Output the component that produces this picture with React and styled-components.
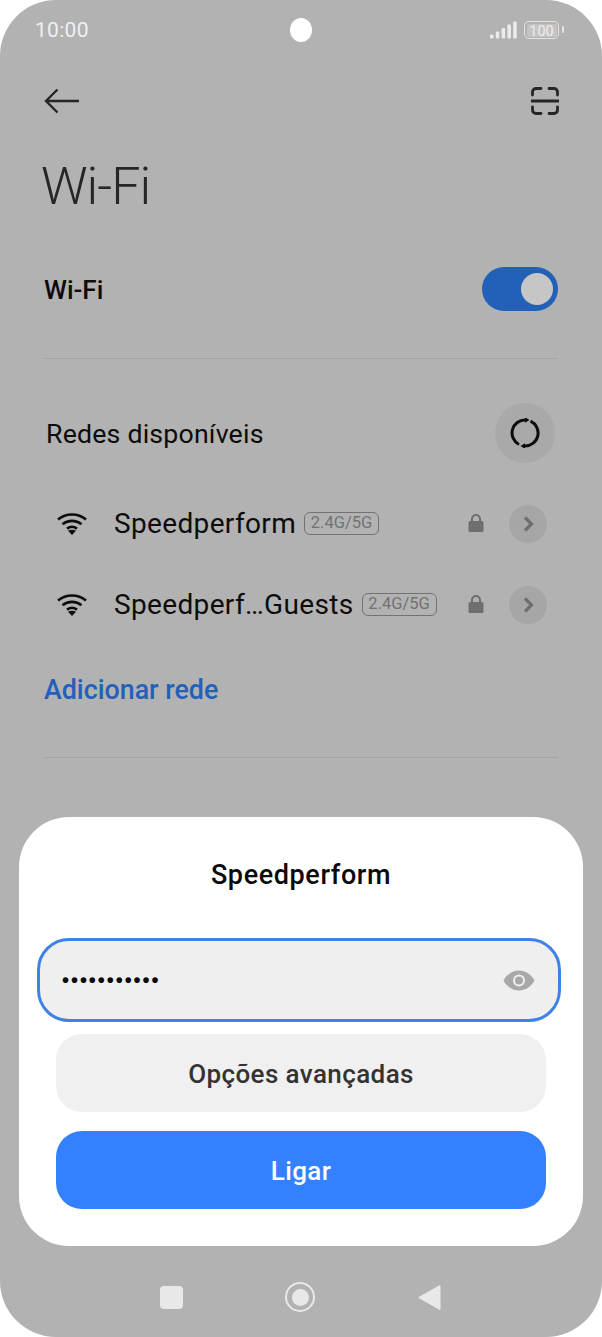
import React from 'react';
import styled, { createGlobalStyle } from 'styled-components';

const GlobalStyle = createGlobalStyle`
  html, body {
    margin: 0;
    padding: 0;
    background: #fff;
    font-family: Roboto, "Noto Sans", sans-serif;
  }
`;

const Phone = styled.div`
  width: 602px;
  height: 1337px;
  background: #b2b2b2;
  border-radius: 56px;
  overflow: hidden;
  display: flex;
  flex-direction: column;
`;

const StatusBar = styled.div`
  flex: none;
  height: 60px;
  padding: 0 35px;
  display: grid;
  grid-template-columns: 1fr auto 1fr;
  align-items: center;
  color: #f0f0f0;
`;

const Time = styled.span`
  font-size: 21px;
  letter-spacing: 0.3px;
`;

const Camera = styled.div`
  width: 22px;
  height: 24px;
  border-radius: 50%;
  background: #fff;
`;

const StatusIcons = styled.div`
  display: flex;
  justify-content: flex-end;
  align-items: center;
  gap: 7px;
  padding-right: 8px;
`;

const Battery = styled.div`
  position: relative;
  width: 35px;
  height: 18px;
  box-sizing: border-box;
  border: 1.5px solid #e4e4e4;
  border-radius: 5px;
  padding: 1.5px;
  font-size: 14.5px;
  line-height: 15px;
  text-align: center;
  background: #c4c4c4;
  background-clip: content-box;
  color: #ededed;
  &::after {
    content: '';
    position: absolute;
    right: -6px;
    top: 4px;
    width: 2px;
    height: 7px;
    background: #e4e4e4;
    border-radius: 1px;
  }
`;

const TopBar = styled.div`
  flex: none;
  height: 82px;
  padding: 0 43px 0 44px;
  display: flex;
  justify-content: space-between;
  align-items: center;
`;

const Title = styled.h1`
  flex: none;
  margin: 0;
  padding: 0 0 0 41px;
  height: 86px;
  font-size: 52px;
  line-height: 90px;
  font-weight: 300;
  letter-spacing: -1px;
  color: #262626;
`;

const ToggleRow = styled.div`
  flex: none;
  height: 131px;
  margin: 0 44px;
  display: flex;
  justify-content: space-between;
  align-items: center;
  border-bottom: 1px solid #a5a5a5;
  box-sizing: border-box;
  padding-bottom: 8px;
`;

const RowLabel = styled.span`
  margin-top: 2px;
  font-size: 26px;
  font-weight: 500;
  color: #0c0c0c;
`;

const Toggle = styled.div`
  width: 76px;
  height: 44px;
  border-radius: 22px;
  background: #2360b8;
  display: flex;
  justify-content: flex-end;
  align-items: center;
  padding-right: 5px;
  box-sizing: border-box;
`;

const Knob = styled.div`
  width: 32px;
  height: 32px;
  border-radius: 50%;
  background: #c6c6c6;
`;

const SectionHead = styled.div`
  flex: none;
  height: 124px;
  box-sizing: border-box;
  padding: 24px 47px 0 46px;
  display: flex;
  justify-content: space-between;
  align-items: center;
`;

const SectionTitle = styled.span`
  margin-top: 2px;
  font-size: 26.7px;
  color: #0c0c0c;
  letter-spacing: 0.2px;
`;

const RefreshButton = styled.div`
  width: 60px;
  height: 60px;
  border-radius: 50%;
  background: #a9a9a9;
  display: flex;
  align-items: center;
  justify-content: center;
`;

const NetworkRow = styled.div`
  flex: none;
  height: 81px;
  padding: 0 55px 0 57px;
  display: flex;
  align-items: center;
`;

const NetworkName = styled.span`
  margin-left: 27px;
  font-size: 28px;
  color: #0c0c0c;
  letter-spacing: 0.35px;
  white-space: nowrap;
`;

const Badge = styled.span`
  margin-left: 8px;
  margin-top: -1px;
  width: 75px;
  height: 23px;
  box-sizing: border-box;
  border: 1.5px solid #727272;
  border-radius: 6px;
  font-size: 16.5px;
  line-height: 20px;
  text-align: center;
  color: #727272;
  white-space: nowrap;
`;

const RowEnd = styled.div`
  margin-left: auto;
  display: flex;
  align-items: center;
  gap: 25px;
`;

const ChevronButton = styled.div`
  width: 38px;
  height: 38px;
  border-radius: 50%;
  background: #a6a6a6;
  display: flex;
  align-items: center;
  justify-content: center;
`;

const AddNetwork = styled.div`
  flex: none;
  margin: 0 44px;
  height: 113px;
  box-sizing: border-box;
  padding-top: 30px;
  border-bottom: 1px solid #a5a5a5;
  font-size: 26.8px;
  line-height: 31px;
  font-weight: 500;
  color: #2360b8;
`;

const Spacer = styled.div`
  flex: 1;
`;

const Sheet = styled.div`
  flex: none;
  margin: 0 19px;
  height: 429px;
  box-sizing: border-box;
  background: #fff;
  border-radius: 50px;
  display: flex;
  flex-direction: column;
  align-items: center;
`;

const SheetTitle = styled.div`
  height: 121px;
  line-height: 116px;
  font-size: 27px;
  font-weight: 500;
  color: #0a0a0a;
  letter-spacing: 0.6px;
`;

const PasswordField = styled.div`
  align-self: flex-start;
  margin-left: 18px;
  width: 524px;
  height: 84px;
  box-sizing: border-box;
  border: 3px solid #3f82e6;
  border-radius: 32px;
  background: #efeff0;
  display: flex;
  justify-content: space-between;
  align-items: center;
  padding: 0 23px 0 22px;
`;

const Dots = styled.span`
  font-size: 20px;
  letter-spacing: 1.95px;
  color: #0a0a0a;
  font-family: "Liberation Sans", sans-serif;
  font-weight: 700;
`;

const SheetButton = styled.div`
  width: 490px;
  height: 78px;
  box-sizing: border-box;
  padding-top: 2px;
  margin-top: ${props => props.$top}px;
  border-radius: 26px;
  display: flex;
  align-items: center;
  justify-content: center;
  font-size: 26px;
  font-weight: 500;
  letter-spacing: 0.4px;
  background: ${props => (props.$primary ? '#3381ff' : '#f0f0f0')};
  color: ${props => (props.$primary ? '#fff' : '#333')};
`;

const NavBar = styled.div`
  flex: none;
  height: 91px;
  box-sizing: border-box;
  padding-top: 11px;
  display: grid;
  grid-template-columns: repeat(3, 1fr);
  width: 388px;
  align-self: center;
  margin-left: -1px;
  align-items: center;
  justify-items: center;
`;

const NavSquare = styled.div`
  width: 23px;
  height: 23px;
  border-radius: 4px;
  background: #e8e8e8;
`;

const NavHome = styled.div`
  width: 30px;
  height: 30px;
  box-sizing: border-box;
  border: 2px solid #e8e8e8;
  border-radius: 50%;
  padding: 4.5px;
  &::before {
    content: '';
    display: block;
    width: 100%;
    height: 100%;
    border-radius: 50%;
    background: #e8e8e8;
  }
`;

const SignalIcon = () => (
  <svg width="27" height="18" viewBox="0 0 27 18" fill="#ececec">
    <rect x="0" y="13.5" width="3.5" height="4" rx="1" />
    <rect x="5.8" y="10.5" width="3.5" height="7" rx="1" />
    <rect x="11.6" y="7" width="3.5" height="10.5" rx="1" />
    <rect x="17.4" y="3.5" width="3.5" height="14" rx="1" />
    <rect x="23.2" y="0.5" width="3.5" height="17" rx="1" />
  </svg>
);

const BackIcon = () => (
  <svg width="36" height="26" viewBox="0 0 36 26" fill="none" stroke="#262626" strokeWidth="2.4">
    <path d="M35 13H2M13.5 1.5L2 13l11.5 11.5" />
  </svg>
);

const ScanIcon = () => (
  <svg width="28" height="28" viewBox="0 0 28 28" fill="none" stroke="#262626" strokeWidth="2.8" strokeLinecap="round">
    <path d="M1.5 8V5a3.5 3.5 0 0 1 3.5-3.5h5M18 1.5h5A3.5 3.5 0 0 1 26.5 5v3M1.5 20v3A3.5 3.5 0 0 0 5 26.5h5M18 26.5h5a3.5 3.5 0 0 0 3.5-3.5v-3" />
    <path d="M0 14h28" strokeLinecap="butt" />
  </svg>
);

const RefreshIcon = () => (
  <svg width="30" height="30" viewBox="0 0 30 30" fill="none" stroke="#0c0c0c" strokeWidth="3">
    <path d="M9 26.5A13 13 0 0 1 15.5 2" />
    <path d="M20.5 3.2A13 13 0 0 1 14.5 28" />
    <path d="M15 -0.8L19.5 2 15 4.8z" fill="#0c0c0c" stroke="none" />
    <path d="M15 25.2L10.5 28 15 30.8z" fill="#0c0c0c" stroke="none" />
  </svg>
);

const WifiIcon = () => (
  <svg width="30" height="22" viewBox="0 0 30 22" fill="none" stroke="#0c0c0c" strokeWidth="2.6">
    <path d="M1 6.5C9 -0.2 21 -0.2 29 6.5" />
    <path d="M5.5 11.2C11 6.8 19 6.8 24.5 11.2" />
    <path d="M10 15.6C13 13.4 17 13.4 20 15.6" />
    <path d="M15 22l-4-4.2c2.4-1.4 5.6-1.4 8 0z" fill="#0c0c0c" stroke="none" />
  </svg>
);

const LockIcon = () => (
  <svg width="16" height="20" viewBox="0 0 16 20">
    <path d="M4 8V5a4 4 0 0 1 8 0v3" fill="none" stroke="#6e6e6e" strokeWidth="2" />
    <rect x="0.5" y="7" width="15" height="11" rx="1.5" fill="#6e6e6e" />
  </svg>
);

const ChevronIcon = () => (
  <svg width="11" height="16" viewBox="0 0 11 16" fill="none" stroke="#6e6e6e" strokeWidth="3.2">
    <path d="M2 1.5L8.5 8 2 14.5" />
  </svg>
);

const EyeIcon = () => (
  <svg width="32" height="21" viewBox="0 0 32 21">
    <path d="M0.5 10.5C4 4 10 0.5 16 0.5S28 4 31.5 10.5C28 17 22 20.5 16 20.5S4 17 0.5 10.5z" fill="#a8a8a8" />
    <circle cx="16" cy="10.5" r="6" fill="#efeff0" />
    <circle cx="16" cy="10.5" r="4" fill="#a8a8a8" />
  </svg>
);

const NavBackIcon = () => (
  <svg width="23" height="27" viewBox="0 0 23 27">
    <path d="M21 1.5L1.5 12.5a1 1 0 0 0 0 2L21 25.5a1 1 0 0 0 1.5-1V2.5a1 1 0 0 0-1.5-1z" fill="#e8e8e8" />
  </svg>
);

const networks = [
  { id: 1, name: 'Speedperform' },
  { id: 2, name: 'Speedperf…Guests' },
];

export default function App() {
  return (
    <>
      <GlobalStyle />
      <Phone>
        <StatusBar>
          <Time>10:00</Time>
          <Camera />
          <StatusIcons>
            <SignalIcon />
            <Battery>100</Battery>
          </StatusIcons>
        </StatusBar>
        <TopBar>
          <BackIcon />
          <ScanIcon />
        </TopBar>
        <Title>Wi-Fi</Title>
        <ToggleRow>
          <RowLabel>Wi-Fi</RowLabel>
          <Toggle>
            <Knob />
          </Toggle>
        </ToggleRow>
        <SectionHead>
          <SectionTitle>Redes disponíveis</SectionTitle>
          <RefreshButton>
            <RefreshIcon />
          </RefreshButton>
        </SectionHead>
        {networks.map((network) => (
          <NetworkRow key={network.id}>
            <WifiIcon />
            <NetworkName>{network.name}</NetworkName>
            <Badge>2.4G/5G</Badge>
            <RowEnd>
              <LockIcon />
              <ChevronButton>
                <ChevronIcon />
              </ChevronButton>
            </RowEnd>
          </NetworkRow>
        ))}
        <AddNetwork>Adicionar rede</AddNetwork>
        <Spacer />
        <Sheet>
          <SheetTitle>Speedperform</SheetTitle>
          <PasswordField>
            <Dots>•••••••••••</Dots>
            <EyeIcon />
          </PasswordField>
          <SheetButton $top={12}>Opções avançadas</SheetButton>
          <SheetButton $top={19} $primary>Ligar</SheetButton>
        </Sheet>
        <NavBar>
          <NavSquare />
          <NavHome />
          <NavBackIcon />
        </NavBar>
      </Phone>
    </>
  );
}
